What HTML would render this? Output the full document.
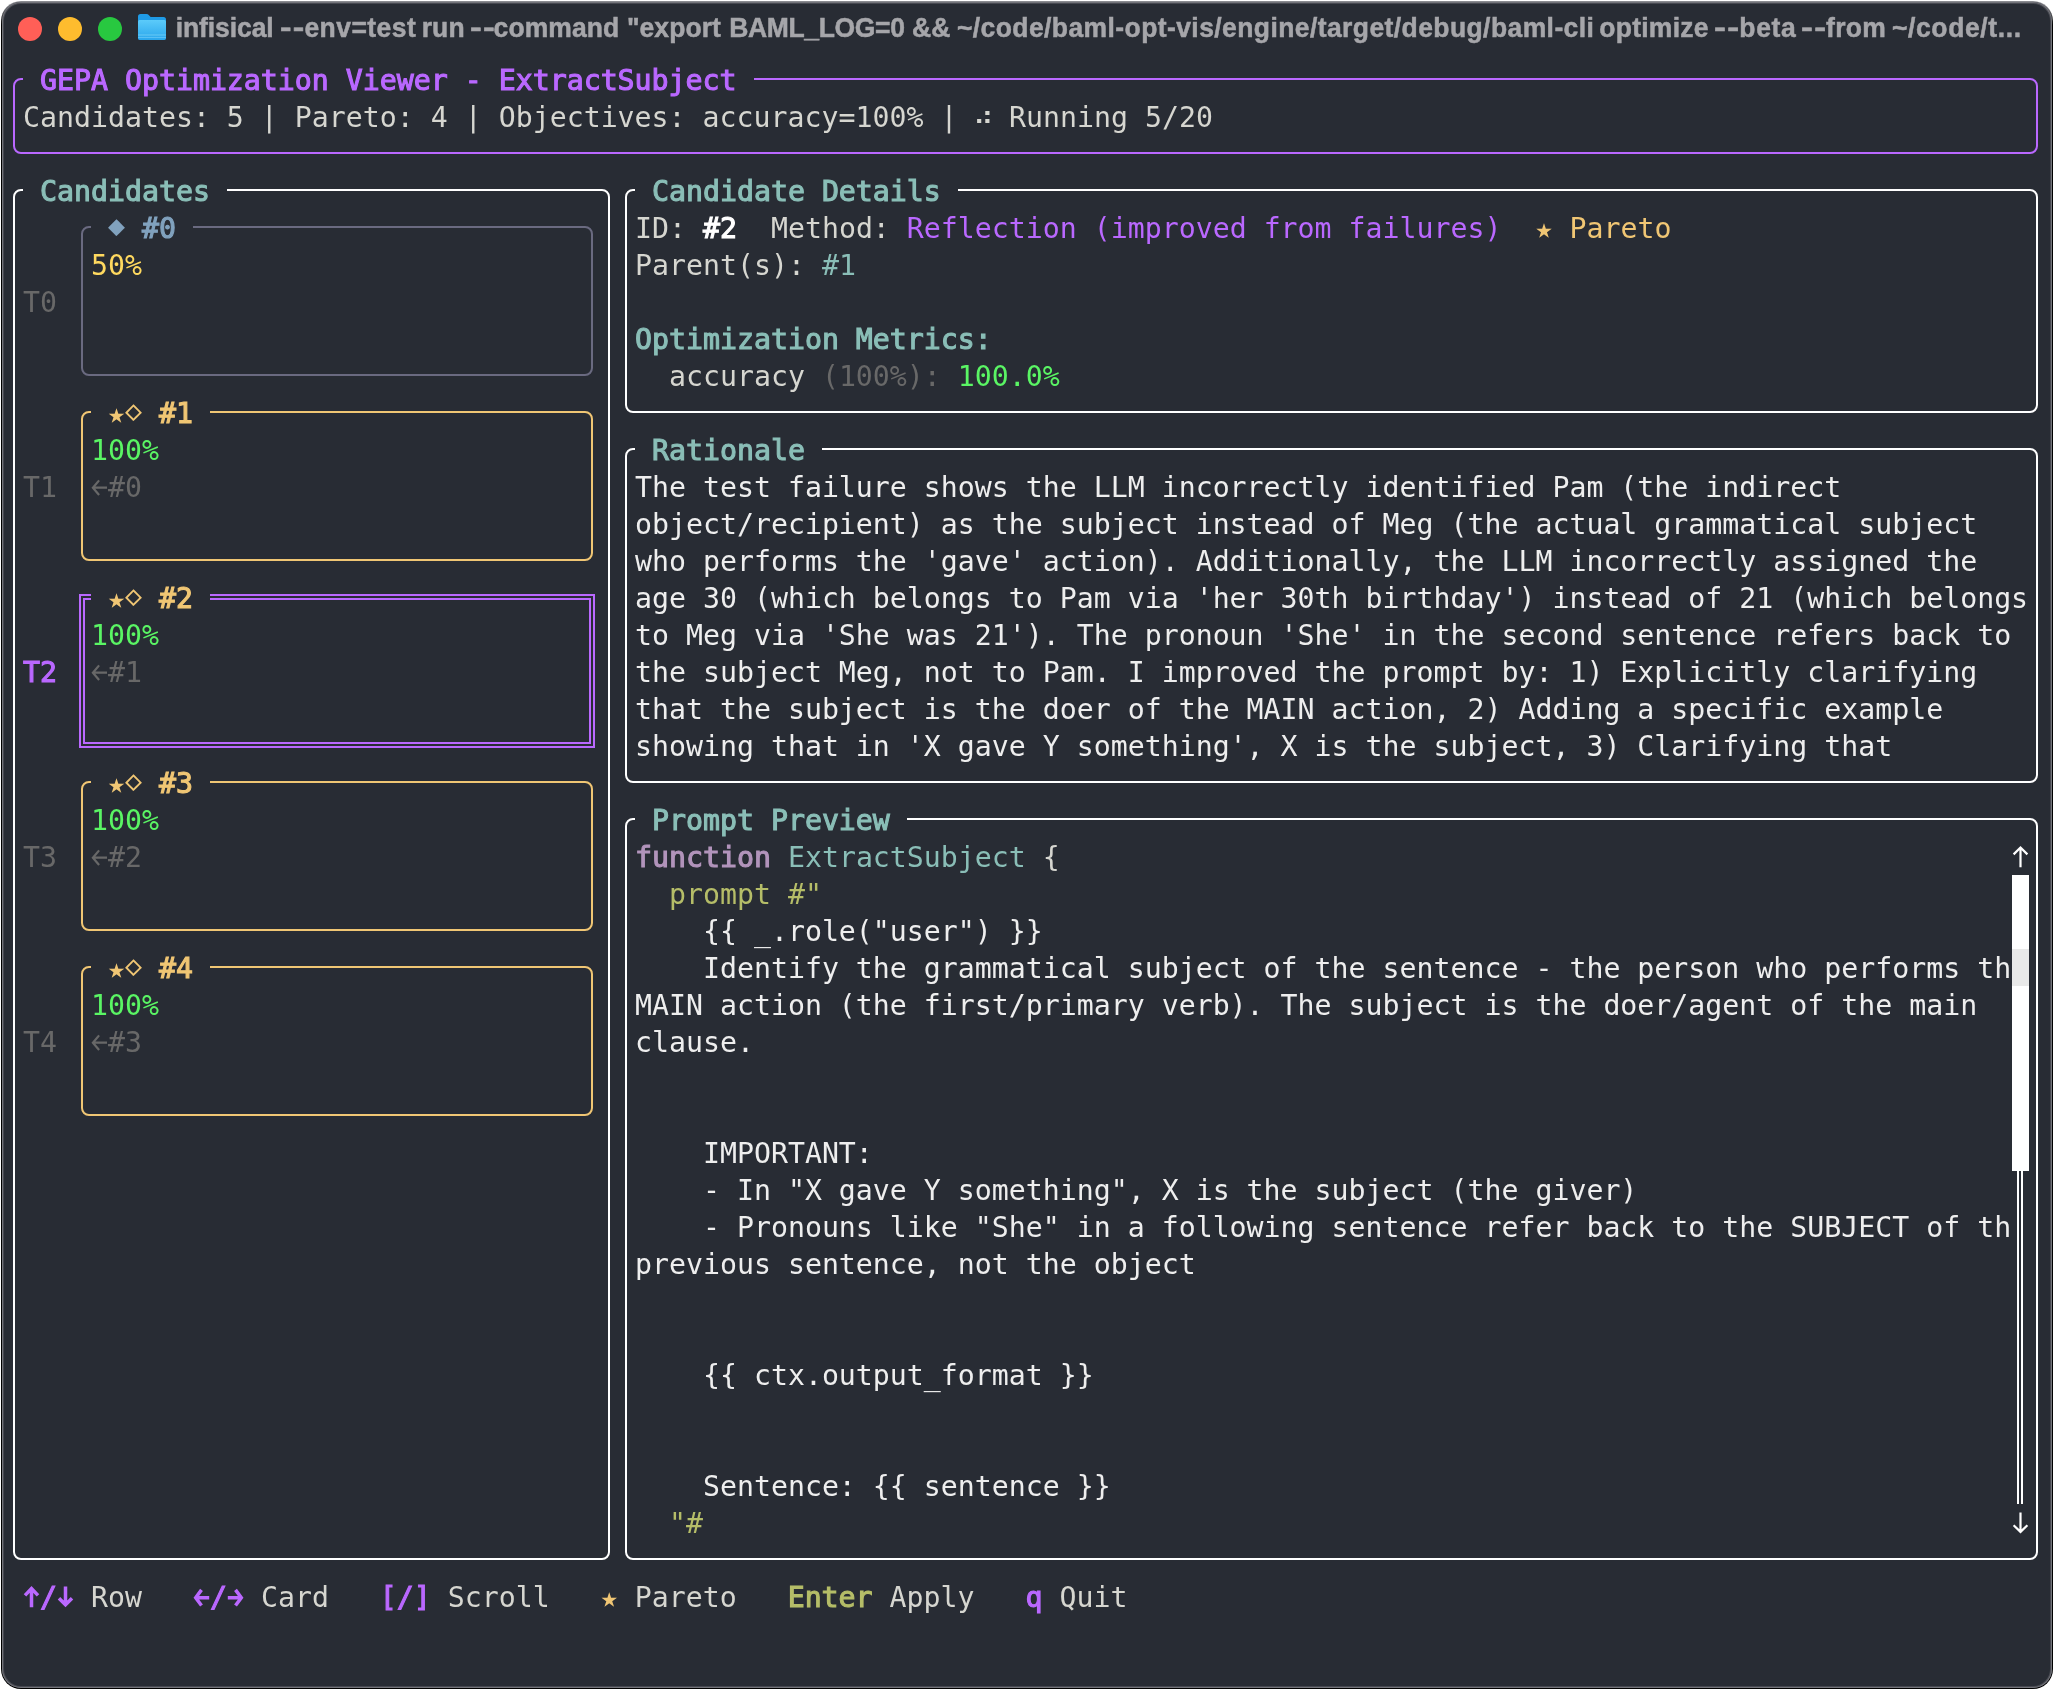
<!DOCTYPE html>
<html lang="en"><head><meta charset="utf-8"><title>GEPA Optimization Viewer</title>
<style>
html,body{margin:0;padding:0;background:#fff;}
body{width:2054px;height:1691px;position:relative;overflow:hidden;}
.win{position:absolute;left:1px;top:1px;width:2052px;height:1688px;border-radius:20px;background:linear-gradient(to bottom,#8a8b90 0,#8a8b90 5px,#000 24px);}
.win::after{content:"";position:absolute;left:1px;top:0.5px;right:1px;bottom:1px;border-radius:19px;background:#282c34;box-shadow:inset 0 0 0 1px #73747a,inset 0 0 0 2px rgba(115,116,122,.4);}
.tl{position:absolute;width:24px;height:24px;border-radius:50%;top:17px;}
.ttl{position:absolute;left:0;top:11px;height:34px;line-height:34px;font-family:"Liberation Sans",sans-serif;font-weight:bold;font-size:26.5px;color:#a6a6aa;-webkit-text-stroke:0.5px #a6a6aa;white-space:pre;will-change:transform;transform:scaleY(1.05);transform-origin:0 26.2px;}
.ttl span{position:absolute;top:0;white-space:pre;}
.term{position:absolute;left:0;top:0;will-change:transform;font-family:"DejaVu Sans Mono","Liberation Mono",monospace;font-size:28.2368px;}
.ln{position:absolute;white-space:pre;height:37px;line-height:37px;margin-top:1px;}
.bx{position:absolute;box-sizing:content-box;}
.star{display:inline-block;width:17px;text-align:center;-webkit-text-stroke:0;}
.dia,.dia2{display:inline-block;width:17px;text-align:center;-webkit-text-stroke:0;position:relative;top:-3.2px;}
b{font-weight:normal;-webkit-text-stroke:1.1px}
.ar{display:inline-block;position:relative;width:17px;height:37px;vertical-align:top;color:transparent;-webkit-text-stroke:0;overflow:hidden;}
.ar svg{position:absolute;left:0;top:-1px;}
.br{display:inline-block;width:17px;text-align:center;position:relative;left:-2px;top:-2px;}
</style></head><body>
<div class="win"></div>
<div class="tl" style="left:18px;background:#ff5f57"></div>
<div class="tl" style="left:58px;background:#febc2e"></div>
<div class="tl" style="left:98px;background:#28c840"></div>
<svg style="position:absolute;left:137px;top:13px" width="30" height="28" viewBox="0 0 30 28">
<defs><linearGradient id="fg" x1="0" y1="0" x2="0" y2="1"><stop offset="0" stop-color="#5ccbfa"/><stop offset="1" stop-color="#2aa6ec"/></linearGradient></defs>
<path d="M1 3.5 Q1 1 3.5 1 L9.5 1 Q11 1 12 2.2 L13.6 4 L26.5 4 Q29 4 29 6.5 L29 24.5 Q29 27 26.5 27 L3.5 27 Q1 27 1 24.5 Z" fill="#1f9be6"/>
<path d="M1 8.5 Q1 7 2.5 7 L27.5 7 Q29 7 29 8.5 L29 24.5 Q29 27 26.5 27 L3.5 27 Q1 27 1 24.5 Z" fill="url(#fg)"/>
<rect x="1" y="21.5" width="28" height="1" fill="#7fd6fb" opacity="0.7"/>
<rect x="1" y="24" width="28" height="1" fill="#7fd6fb" opacity="0.5"/>
</svg>
<div class="ttl"><span style="left:175.7px;letter-spacing:-0.086px">infisical</span> <span style="left:280.3px;letter-spacing:1px;transform:scaleX(1.305);transform-origin:0 0">--</span><span style="left:304.4px;letter-spacing:0.447px">env=test</span> <span style="left:421.7px;letter-spacing:0.103px">run</span> <span style="left:470.0px;letter-spacing:1px;transform:scaleX(1.329);transform-origin:0 0">--</span><span style="left:493.6px;letter-spacing:0.088px">command</span> <span style="left:626.9px;letter-spacing:0.073px">"export</span> <span style="left:729.2px;letter-spacing:-0.356px">BAML_LOG=0</span> <span style="left:911.9px;letter-spacing:0.122px">&amp;&amp;</span> <span style="left:956.9px;letter-spacing:0.411px">~/code/baml-opt-vis/engine/target/debug/baml-cli</span> <span style="left:1599.3px;letter-spacing:0.245px">optimize</span> <span style="left:1713.8px;letter-spacing:1px;transform:scaleX(1.347);transform-origin:0 0">--</span><span style="left:1739.3px;letter-spacing:0.666px">beta</span> <span style="left:1801.4px;letter-spacing:1px;transform:scaleX(1.341);transform-origin:0 0">--</span><span style="left:1826.0px;letter-spacing:0.337px">from</span> <span style="left:1891.9px;letter-spacing:0.632px">~/code/t...</span></div>
<div class="term">
<div class="bx" style="left:13.0px;top:78.0px;width:2021px;height:72px;border:2px solid #ba68ff;border-radius:8px"></div>
<div class="ln" style="left:23px;top:61px;color:#ba68ff;background:#282c34;-webkit-text-stroke:1.1px"> GEPA Optimization Viewer - ExtractSubject </div>
<div class="ln " style="left:23px;top:98px"><span style="color:#d6d6d0">Candidates: 5 | Pareto: 4 | Objectives: accuracy=100% | </span></div>
<div class="ln" style="left:975px;top:98px;color:#d6d6d0"><span class="br">⠴</span></div>
<div class="ln " style="left:1009px;top:98px"><span style="color:#d6d6d0">Running 5/20</span></div>
<div class="bx" style="left:13.0px;top:189.0px;width:593px;height:1367px;border:2px solid #ffffff;border-radius:8px"></div>
<div class="ln" style="left:23px;top:172px;color:#8abeb7;background:#282c34;-webkit-text-stroke:1.1px"> Candidates </div>
<div class="bx" style="left:81.0px;top:226.0px;width:508px;height:146px;border:2px solid #6a6a80;border-radius:8px"></div>
<div class="ln" style="left:91px;top:209px;background:#282c34;color:#81a2be;-webkit-text-stroke:1.1px"> <span class="dia">◆</span> #0 </div>
<div class="ln " style="left:91px;top:246px"><span style="color:#ffd95f">50%</span></div>
<div class="ln " style="left:23px;top:283px"><span style="color:#686868">T0</span></div>
<div class="bx" style="left:81.0px;top:411.0px;width:508px;height:146px;border:2px solid #f0c674;border-radius:8px"></div>
<div class="ln" style="left:91px;top:394px;background:#282c34;color:#f0c674;-webkit-text-stroke:1.1px"> <span class="star">★</span><span class="dia2">◇</span> #1 </div>
<div class="ln " style="left:91px;top:431px"><span style="color:#5af564">100%</span></div>
<div class="ln" style="left:91px;top:468px;color:#686868"><span class="ar">←<svg width="17" height="37" viewBox="0 0 17 37"><path d="M16 19.7H2M8.1 12.4L1.9 19.7L8.1 27" fill="none" stroke="#686868" stroke-width="2.2"/></svg></span>#0</div>
<div class="ln " style="left:23px;top:468px"><span style="color:#686868">T1</span></div>
<div class="bx" style="left:79px;top:594px;width:512px;height:150px;border:2px solid #ba68ff"></div>
<div class="bx" style="left:83px;top:598px;width:504px;height:142px;border:2px solid #ba68ff"></div>
<div class="ln" style="left:91px;top:579px;background:#282c34;color:#f0c674;-webkit-text-stroke:1.1px"> <span class="star">★</span><span class="dia2">◇</span> #2 </div>
<div class="ln " style="left:91px;top:616px"><span style="color:#5af564">100%</span></div>
<div class="ln" style="left:91px;top:653px;color:#686868"><span class="ar">←<svg width="17" height="37" viewBox="0 0 17 37"><path d="M16 19.7H2M8.1 12.4L1.9 19.7L8.1 27" fill="none" stroke="#686868" stroke-width="2.2"/></svg></span>#1</div>
<div class="ln " style="left:23px;top:653px"><span style="color:#ba68ff;-webkit-text-stroke:1.1px">T2</span></div>
<div class="bx" style="left:81.0px;top:781.0px;width:508px;height:146px;border:2px solid #f0c674;border-radius:8px"></div>
<div class="ln" style="left:91px;top:764px;background:#282c34;color:#f0c674;-webkit-text-stroke:1.1px"> <span class="star">★</span><span class="dia2">◇</span> #3 </div>
<div class="ln " style="left:91px;top:801px"><span style="color:#5af564">100%</span></div>
<div class="ln" style="left:91px;top:838px;color:#686868"><span class="ar">←<svg width="17" height="37" viewBox="0 0 17 37"><path d="M16 19.7H2M8.1 12.4L1.9 19.7L8.1 27" fill="none" stroke="#686868" stroke-width="2.2"/></svg></span>#2</div>
<div class="ln " style="left:23px;top:838px"><span style="color:#686868">T3</span></div>
<div class="bx" style="left:81.0px;top:966.0px;width:508px;height:146px;border:2px solid #f0c674;border-radius:8px"></div>
<div class="ln" style="left:91px;top:949px;background:#282c34;color:#f0c674;-webkit-text-stroke:1.1px"> <span class="star">★</span><span class="dia2">◇</span> #4 </div>
<div class="ln " style="left:91px;top:986px"><span style="color:#5af564">100%</span></div>
<div class="ln" style="left:91px;top:1023px;color:#686868"><span class="ar">←<svg width="17" height="37" viewBox="0 0 17 37"><path d="M16 19.7H2M8.1 12.4L1.9 19.7L8.1 27" fill="none" stroke="#686868" stroke-width="2.2"/></svg></span>#3</div>
<div class="ln " style="left:23px;top:1023px"><span style="color:#686868">T4</span></div>
<div class="bx" style="left:625.0px;top:189.0px;width:1409px;height:220px;border:2px solid #ffffff;border-radius:8px"></div>
<div class="ln" style="left:635px;top:172px;color:#8abeb7;background:#282c34;-webkit-text-stroke:1.1px"> Candidate Details </div>
<div class="ln" style="left:635px;top:209px"><span style="color:#d6d6d0">ID: </span><span style="color:#ffffff;-webkit-text-stroke:1.1px">#2</span><span style="color:#d6d6d0">  Method: </span><span style="color:#ba68ff">Reflection (improved from failures)</span>  <span style="color:#f0c674"><span class="star">★</span> Pareto</span></div>
<div class="ln " style="left:635px;top:246px"><span style="color:#d6d6d0">Parent(s): </span><span style="color:#8abeb7">#1</span></div>
<div class="ln " style="left:635px;top:320px"><span style="color:#8abeb7;-webkit-text-stroke:1.1px">Optimization Metrics:</span></div>
<div class="ln " style="left:635px;top:357px"><span style="color:#d6d6d0">  accuracy </span><span style="color:#686868">(100%): </span><span style="color:#5af564">100.0%</span></div>
<div class="bx" style="left:625.0px;top:448.0px;width:1409px;height:331px;border:2px solid #ffffff;border-radius:8px"></div>
<div class="ln" style="left:635px;top:431px;color:#8abeb7;background:#282c34;-webkit-text-stroke:1.1px"> Rationale </div>
<div class="ln " style="left:635px;top:468px"><span style="color:#eeeeee">The test failure shows the LLM incorrectly identified Pam (the indirect</span></div>
<div class="ln " style="left:635px;top:505px"><span style="color:#eeeeee">object/recipient) as the subject instead of Meg (the actual grammatical subject</span></div>
<div class="ln " style="left:635px;top:542px"><span style="color:#eeeeee">who performs the 'gave' action). Additionally, the LLM incorrectly assigned the</span></div>
<div class="ln " style="left:635px;top:579px"><span style="color:#eeeeee">age 30 (which belongs to Pam via 'her 30th birthday') instead of 21 (which belongs</span></div>
<div class="ln " style="left:635px;top:616px"><span style="color:#eeeeee">to Meg via 'She was 21'). The pronoun 'She' in the second sentence refers back to</span></div>
<div class="ln " style="left:635px;top:653px"><span style="color:#eeeeee">the subject Meg, not to Pam. I improved the prompt by: 1) Explicitly clarifying</span></div>
<div class="ln " style="left:635px;top:690px"><span style="color:#eeeeee">that the subject is the doer of the MAIN action, 2) Adding a specific example</span></div>
<div class="ln " style="left:635px;top:727px"><span style="color:#eeeeee">showing that in 'X gave Y something', X is the subject, 3) Clarifying that</span></div>
<div class="bx" style="left:625.0px;top:818.0px;width:1409px;height:738px;border:2px solid #ffffff;border-radius:8px"></div>
<div class="ln" style="left:635px;top:801px;color:#8abeb7;background:#282c34;-webkit-text-stroke:1.1px"> Prompt Preview </div>
<div class="ln " style="left:635px;top:838px"><span style="color:#b294bb;-webkit-text-stroke:1.1px">function</span><span style="color:#d6d6d0"> </span><span style="color:#8abeb7">ExtractSubject</span><span style="color:#d6d6d0"> {</span></div>
<div class="ln " style="left:635px;top:875px"><span style="color:#b5bd68">  prompt #"</span></div>
<div class="ln " style="left:635px;top:912px"><span style="color:#eeeeee">    {{ _.role("user") }}</span></div>
<div class="ln " style="left:635px;top:949px"><span style="color:#eeeeee">    Identify the grammatical subject of the sentence - the person who performs th</span></div>
<div class="ln " style="left:635px;top:986px"><span style="color:#eeeeee">MAIN action (the first/primary verb). The subject is the doer/agent of the main</span></div>
<div class="ln " style="left:635px;top:1023px"><span style="color:#eeeeee">clause.</span></div>
<div class="ln " style="left:635px;top:1134px"><span style="color:#eeeeee">    IMPORTANT:</span></div>
<div class="ln " style="left:635px;top:1171px"><span style="color:#eeeeee">    - In "X gave Y something", X is the subject (the giver)</span></div>
<div class="ln " style="left:635px;top:1208px"><span style="color:#eeeeee">    - Pronouns like "She" in a following sentence refer back to the SUBJECT of th</span></div>
<div class="ln " style="left:635px;top:1245px"><span style="color:#eeeeee">previous sentence, not the object</span></div>
<div class="ln " style="left:635px;top:1356px"><span style="color:#eeeeee">    {{ ctx.output_format }}</span></div>
<div class="ln " style="left:635px;top:1467px"><span style="color:#eeeeee">    Sentence: {{ sentence }}</span></div>
<div class="ln " style="left:635px;top:1504px"><span style="color:#b5bd68">  "#</span></div>
<div class="ln" style="left:2012px;top:838px"><span class="ar">↑<svg width="17" height="37" viewBox="0 0 17 37"><path d="M8.5 29.3V9.8M1.6 16.4L8.5 9.5L15.4 16.4" fill="none" stroke="#fff" stroke-width="2.2"/></svg></span></div>
<div class="bx" style="left:2012px;top:875px;width:17px;height:296px;background:#fff"></div>
<div class="bx" style="left:2012px;top:949px;width:17px;height:37px;background:#e9e9e9"></div>
<div class="bx" style="left:2017px;top:1171px;width:2px;height:333px;border-left:2px solid #fff;border-right:2px solid #fff"></div>
<div class="ln" style="left:2012px;top:1504px"><span class="ar">↓<svg width="17" height="37" viewBox="0 0 17 37"><path d="M8.5 8.4V27.6M1.6 21.2L8.5 27.9L15.4 21.2" fill="none" stroke="#fff" stroke-width="2.2"/></svg></span></div>
<div class="ln" style="left:23px;top:1578px;color:#d6d6d0"><b style="color:#ba68ff"><span class="ar">↑<svg width="17" height="37" viewBox="0 0 17 37"><path d="M8.5 29.2V10.8M2 17.4L8.5 10.6L15 17.4" fill="none" stroke="#ba68ff" stroke-width="3.5"/></svg></span>/<span class="ar">↓<svg width="17" height="37" viewBox="0 0 17 37"><path d="M8.5 8.4V26.6M2 20.2L8.5 26.8L15 20.2" fill="none" stroke="#ba68ff" stroke-width="3.5"/></svg></span></b> Row   <b style="color:#ba68ff"><span class="ar">←<svg width="17" height="37" viewBox="0 0 17 37"><path d="M16.2 19.7H2.8M8.5 11.9L2.7 19.7L8.5 27.5" fill="none" stroke="#ba68ff" stroke-width="3.5"/></svg></span>/<span class="ar">→<svg width="17" height="37" viewBox="0 0 17 37"><path d="M0.8 19.7H14.2M8.5 11.9L14.3 19.7L8.5 27.5" fill="none" stroke="#ba68ff" stroke-width="3.5"/></svg></span></b> Card   <b style="color:#ba68ff">[/]</b> Scroll   <span style="color:#f0c674"><span class="star">★</span></span> Pareto   <b style="color:#b5bd68">Enter</b> Apply   <b style="color:#ba68ff">q</b> Quit</div>
</div>
</body></html>
